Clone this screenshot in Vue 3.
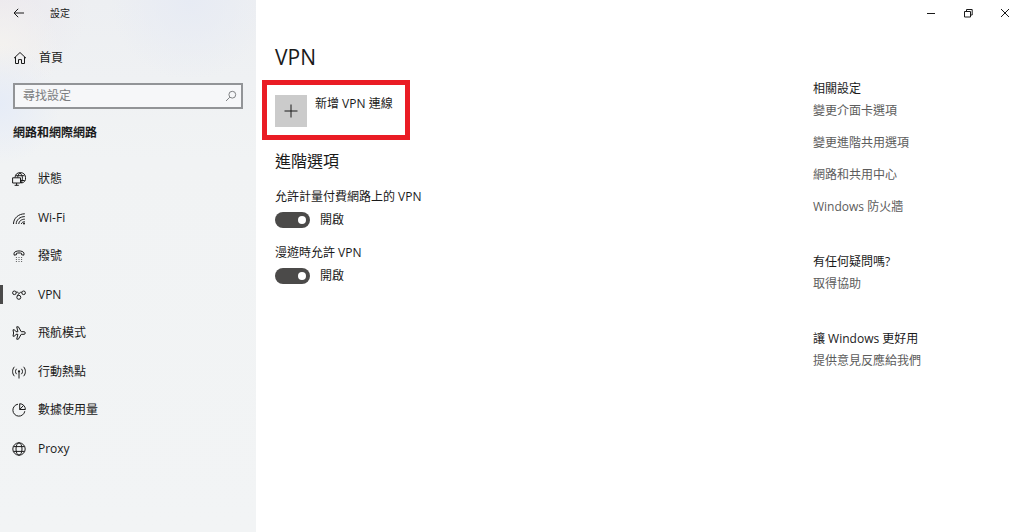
<script setup>
import { ref } from 'vue'

const query = ref('')
const current = ref('vpn')

const navItems = [
  { id: 'status', label: '狀態' },
  { id: 'wifi', label: 'Wi-Fi' },
  { id: 'dialup', label: '撥號' },
  { id: 'vpn', label: 'VPN' },
  { id: 'airplane', label: '飛航模式' },
  { id: 'hotspot', label: '行動熱點' },
  { id: 'data', label: '數據使用量' },
  { id: 'proxy', label: 'Proxy' }
]

const options = ref([
  { id: 'metered', label: '允許計量付費網路上的 VPN', on: true },
  { id: 'roaming', label: '漫遊時允許 VPN', on: true }
])

const related = [
  { title: '相關設定', links: ['變更介面卡選項', '變更進階共用選項', '網路和共用中心', 'Windows 防火牆'] },
  { title: '有任何疑問嗎?', links: ['取得協助'] },
  { title: '讓 Windows 更好用', links: ['提供意見反應給我們'] }
]
</script>

<template>
  <div class="window">
    <aside class="sidebar">
      <header class="side-bar-top">
        <button class="back" type="button" aria-label="上一頁">
          <svg viewBox="0 0 12 12" width="12" height="12"><path d="M1 6H11M5.2 1.8L1 6L5.2 10.2" /></svg>
        </button>
        <span class="app-name">設定</span>
      </header>

      <a class="home" href="#">
        <svg viewBox="0 0 14 14" width="14" height="14"><path d="M1 7.2L7 1.5L13 7.2M2.5 6V12.5H5.5V8.6H8.5V12.5H11.5V6" /></svg>
        <span>首頁</span>
      </a>

      <form class="search" @submit.prevent>
        <input v-model="query" type="text" placeholder="尋找設定" aria-label="尋找設定" />
        <button type="submit" aria-label="搜尋">
          <svg viewBox="0 0 12 12" width="12" height="12"><circle cx="7.3" cy="4.7" r="3.4" /><path d="M4.8 7.2L1 11" /></svg>
        </button>
      </form>

      <h2 class="category">網路和網際網路</h2>

      <nav class="nav">
        <a
          v-for="item in navItems"
          :key="item.id"
          href="#"
          :class="{ active: item.id === current }"
          @click.prevent="current = item.id"
        >
          <svg viewBox="0 0 14 14" width="14" height="14">
            <g v-if="item.id === 'status'">
              <path d="M3 5.5A5.3 5.3 0 1 1 9.5 11.1M3.6 3.7H12.4M8 .9C6.5 2.2 5.8 3.6 5.7 5.5M8 .9C9.8 2.6 10.5 4.4 10.4 6.2C10.3 8.2 9.9 9.8 9.3 11M9 8.5H12.6" />
              <path d="M.6 5.8H8.5V11H.6ZM4.6 11V13.3M2.6 13.3H6.8" />
            </g>
            <g v-else-if="item.id === 'wifi'">
              <path d="M1.5 13C1.5 7.2 6.5 2.8 12.8 2.8M4.2 13C4.2 8.8 8 5.6 12.8 5.6M6.8 13C6.8 10.2 9.5 8.2 12.8 8.2M9.4 13C9.4 11.7 11 10.7 12.8 10.7" />
              <circle class="solid" cx="12" cy="12.5" r="1" />
            </g>
            <g v-else-if="item.id === 'dialup'">
              <path d="M2 4.8C1.5 1 12.5 1 12 4.8L11.8 6.2L9.5 5.7V4.3C8 3.8 6 3.8 4.5 4.3V5.7L2.2 6.2Z" />
              <path class="dots" d="M3.9 8.5H4.9M6.5 8.5H7.5M9.1 8.5H10.1M3.9 10.5H4.9M6.5 10.5H7.5M9.1 10.5H10.1M3.9 12.5H4.9M6.5 12.5H7.5M9.1 12.5H10.1" />
            </g>
            <g v-else-if="item.id === 'vpn'">
              <circle cx="2.4" cy="4.8" r="1.8" />
              <circle cx="11.6" cy="4.8" r="1.8" />
              <circle cx="6.8" cy="9.3" r="2" />
              <path d="M4.1 4.2C5.5 3.8 6.2 4.4 6.9 5.4M9.9 4.2C7.6 3.9 6.9 5.8 5.2 7.8" />
            </g>
            <g v-else-if="item.id === 'airplane'">
              <path d="M1 3.8H2.5L4 5.7H5.9L4.7 .8H6.4L9.2 5.7H12C13.8 5.9 13.8 8.1 12 8.3H9.2L6.4 13.2H4.7L5.9 8.3H4L2.5 10.2H1L1.6 7Z" />
            </g>
            <g v-else-if="item.id === 'hotspot'">
              <path d="M7 6V13.5M2.4 1.8C0 4.5 0 8.5 2.4 11.2M11.6 1.8C14 4.5 14 8.5 11.6 11.2M4.6 3.8C3.1 5.5 3.1 7.5 4.6 9.2M9.4 3.8C10.9 5.5 10.9 7.5 9.4 9.2" />
              <circle class="solid" cx="7" cy="6.3" r="1.1" />
            </g>
            <g v-else-if="item.id === 'data'">
              <path d="M6 1.2A6 6 0 1 0 12.8 8.2M7.7 .7V6.5H13.4A5.8 5.8 0 0 0 7.7 .7ZM7.7 6.5L11.6 2.4" />
            </g>
            <g v-else>
              <circle cx="7" cy="7" r="6.2" />
              <ellipse cx="7" cy="7" rx="3" ry="6.2" />
              <path d="M1.5 4.6H12.5M1.5 9.4H12.5" />
            </g>
          </svg>
          <span>{{ item.label }}</span>
        </a>
      </nav>
    </aside>

    <div class="page">
      <header class="controls">
        <button type="button" aria-label="最小化"><svg viewBox="0 0 10 10" width="10" height="10"><path d="M1 5.5H9" /></svg></button>
        <button type="button" aria-label="還原"><svg viewBox="0 0 10 10" width="10" height="10"><path d="M1.5 3.5H7.5V9H1.5ZM3.5 3.5V1.5H9.2V7H7.5" /></svg></button>
        <button type="button" aria-label="關閉"><svg viewBox="0 0 10 10" width="10" height="10"><path d="M1 1L9 9M9 1L1 9" /></svg></button>
      </header>

      <div class="columns">
        <main class="content">
          <h1>VPN</h1>
          <div class="highlight">
            <button class="add" type="button">
              <span class="plus"><svg viewBox="0 0 14 14" width="14" height="14"><path d="M7 .5V13.5M.5 7H13.5" /></svg></span>
              <span>新增 VPN 連線</span>
            </button>
          </div>

          <h2>進階選項</h2>
          <div v-for="option in options" :key="option.id" class="option">
            <label :for="option.id">{{ option.label }}</label>
            <div class="switch-row">
              <input :id="option.id" v-model="option.on" type="checkbox" role="switch" />
              <span>{{ option.on ? '開啟' : '關閉' }}</span>
            </div>
          </div>
        </main>

        <aside class="related">
          <section v-for="group in related" :key="group.title">
            <h3>{{ group.title }}</h3>
            <a v-for="link in group.links" :key="link" href="#">{{ link }}</a>
          </section>
        </aside>
      </div>
    </div>
  </div>
</template>

<style>
body {
  margin: 0;
  background: #fff;
}
</style>

<style scoped>
.window {
  display: grid;
  grid-template-columns: 256px 1fr;
  min-height: 100vh;
  font-family: "Open Sans", "Noto Sans CJK TC", sans-serif;
  font-size: 12px;
  line-height: 20px;
  color: #1a1a1a;
}

h1, h2, h3 {
  margin: 0;
  font-weight: 400;
}

a {
  color: inherit;
  text-decoration: none;
}

button {
  border: 0;
  padding: 0;
  background: none;
  font: inherit;
  color: inherit;
}

svg {
  display: block;
  flex: none;
  fill: none;
  stroke: currentColor;
  stroke-width: 1;
}

.solid {
  fill: currentColor;
  stroke: none;
}

.dots {
  opacity: 0.7;
}

.sidebar {
  background:
    radial-gradient(circle at 0 104px, #e6ecf7 0, #e6ecf700 60px),
    radial-gradient(circle at 0 50px, #f4f2ef 0, #f4f2ef00 60px),
    radial-gradient(circle at 0 0, #ece9ee 0, #ece9ee00 90px),
    radial-gradient(circle at 190px 0, #e7ebf4 0, #e7ebf400 80px),
    linear-gradient(#edeff2, #f1f3f4 160px, #f2f4f5);
}

.side-bar-top {
  display: flex;
  align-items: center;
  gap: 25px;
  height: 26px;
  padding-left: 13px;
}

.app-name {
  font-size: 10px;
}

.home {
  display: flex;
  align-items: center;
  gap: 12px;
  margin-top: 22px;
  padding-left: 13px;
}

.search {
  display: flex;
  align-items: center;
  height: 26px;
  box-sizing: border-box;
  margin: 15px 13px 0;
  padding: 0 4px 0 8px;
  border: 2px solid #929497;
  background: #f6f7f9;
}

.search input {
  flex: 1;
  min-width: 0;
  border: 0;
  padding: 0;
  outline: 0;
  background: none;
  font: inherit;
}

.search input::placeholder {
  color: #7b7d80;
  opacity: 1;
}

.search button {
  color: #808285;
}

.category {
  margin-top: 14px;
  padding-left: 13px;
  font-size: 12px;
  font-weight: 700;
}

.nav {
  display: grid;
  grid-template-rows: repeat(8, 1fr);
  height: 308px;
  margin-top: 17px;
}

.nav a {
  position: relative;
  display: flex;
  align-items: center;
  gap: 12px;
  padding-left: 12px;
}

.nav .active::before {
  content: "";
  position: absolute;
  left: 0;
  width: 3px;
  height: 19px;
  background: #4a4a4a;
}

.controls {
  display: flex;
  justify-content: flex-end;
  height: 26px;
  padding-right: 1px;
}

.controls button {
  display: grid;
  place-items: center;
  width: 37px;
}

.columns {
  display: flex;
}

.content {
  flex: 1;
  padding: 15px 0 0 19px;
}

.content h1 {
  font-size: 21px;
  line-height: 32px;
}

.content h2 {
  margin-top: 9px;
  font-size: 16px;
  line-height: 24px;
}

.highlight {
  width: fit-content;
  margin: 7px 0 0 -13px;
  padding: 10px 12px 8px 8px;
  border: 5px solid #ea1c24;
}

.add {
  display: flex;
  align-items: flex-start;
  gap: 8px;
  line-height: 18px;
}

.plus {
  display: grid;
  place-items: center;
  width: 32px;
  height: 32px;
  background: #cbcbcb;
}

.option {
  margin-top: 14px;
}

.option + .option {
  margin-top: 10px;
}

.option label {
  display: block;
}

.switch-row {
  display: flex;
  align-items: center;
  gap: 10px;
  height: 26px;
}

.switch-row input {
  appearance: none;
  display: flex;
  align-items: center;
  box-sizing: border-box;
  width: 35px;
  height: 16px;
  margin: 0;
  padding: 0 4px;
  border-radius: 8px;
  background: #4b4a49;
}

.switch-row input::before {
  content: "";
  width: 8px;
  height: 8px;
  border-radius: 50%;
  background: #fff;
}

.switch-row input:checked {
  justify-content: flex-end;
}

.related {
  width: 211px;
  padding-top: 53px;
}

.related section + section {
  margin-top: 35px;
}

.related a {
  display: block;
  width: fit-content;
  margin-top: 12px;
  color: #5c5c5c;
}

.related h3 {
  font-size: 12px;
}

.related h3 + a {
  margin-top: 2px;
}
</style>
